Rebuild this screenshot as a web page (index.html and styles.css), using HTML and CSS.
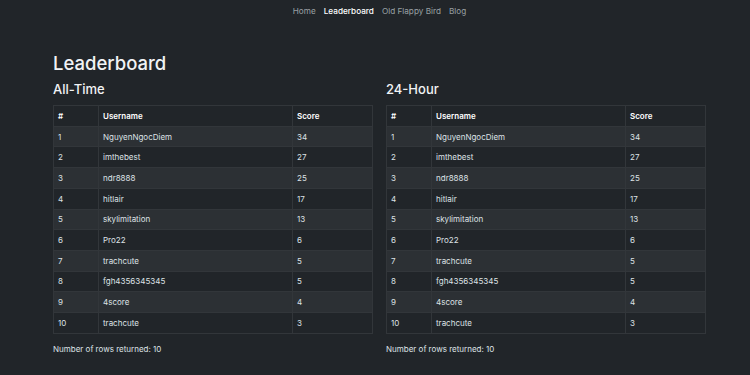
FILE: index.html
```html
<!DOCTYPE html>
<html lang="en">

<head>
  <meta charset="UTF-8">
  <meta name="viewport" content="width=device-width, initial-scale=1.0">
  <title>Leaderboard</title>
  <link rel="stylesheet" href="styles.css">
</head>

<body>
  <nav class="nav">
    <a href="#" class="nav-link">Home</a>
    <a href="#" class="nav-link active">Leaderboard</a>
    <a href="#" class="nav-link">Old Flappy Bird</a>
    <a href="#" class="nav-link">Blog</a>
  </nav>

  <div class="container">
    <h1>Leaderboard</h1>

    <div class="row">
      <div class="col">
        <h2>All-Time</h2>
        <table class="table">
          <thead>
            <tr><th class="c-rank">#</th><th class="c-user">Username</th><th>Score</th></tr>
          </thead>
          <tbody>
            <tr><td>1</td><td>NguyenNgocDiem</td><td>34</td></tr>
            <tr><td>2</td><td>imthebest</td><td>27</td></tr>
            <tr><td>3</td><td>ndr8888</td><td>25</td></tr>
            <tr><td>4</td><td>hitlair</td><td>17</td></tr>
            <tr><td>5</td><td>skylimitation</td><td>13</td></tr>
            <tr><td>6</td><td>Pro22</td><td>6</td></tr>
            <tr><td>7</td><td>trachcute</td><td>5</td></tr>
            <tr><td>8</td><td>fgh4356345345</td><td>5</td></tr>
            <tr><td>9</td><td>4score</td><td>4</td></tr>
            <tr><td>10</td><td>trachcute</td><td>3</td></tr>
          </tbody>
        </table>
        <p class="rows-note">Number of rows returned: 10</p>
      </div>

      <div class="col">
        <h2>24-Hour</h2>
        <table class="table">
          <thead>
            <tr><th class="c-rank">#</th><th class="c-user">Username</th><th>Score</th></tr>
          </thead>
          <tbody>
            <tr><td>1</td><td>NguyenNgocDiem</td><td>34</td></tr>
            <tr><td>2</td><td>imthebest</td><td>27</td></tr>
            <tr><td>3</td><td>ndr8888</td><td>25</td></tr>
            <tr><td>4</td><td>hitlair</td><td>17</td></tr>
            <tr><td>5</td><td>skylimitation</td><td>13</td></tr>
            <tr><td>6</td><td>Pro22</td><td>6</td></tr>
            <tr><td>7</td><td>trachcute</td><td>5</td></tr>
            <tr><td>8</td><td>fgh4356345345</td><td>5</td></tr>
            <tr><td>9</td><td>4score</td><td>4</td></tr>
            <tr><td>10</td><td>trachcute</td><td>3</td></tr>
          </tbody>
        </table>
        <p class="rows-note">Number of rows returned: 10</p>
      </div>
    </div>
  </div>
</body>

</html>
```

FILE: styles.css
```css
* {
  margin: 0;
  padding: 0;
  box-sizing: border-box;
}

body {
  font-family: Inter, 'Noto Sans', sans-serif;
  background: #212529;
  color: #dee2e6;
  font-size: 8px;
  line-height: 1.5;
  padding-left: 9px;
}

.nav {
  display: flex;
  justify-content: center;
  gap: 8px;
  padding: 5px 0 4px;
  font-size: 8.2px;
}

.nav-link {
  color: rgba(222, 226, 230, 0.65);
  text-decoration: none;
}

.nav-link.active {
  color: #fff;
  font-weight: 500;
}

.container {
  width: 653px;
  margin: 0 auto;
  padding-top: 31px;
}

h1 {
  font-size: 18.5px;
  font-weight: 500;
  line-height: 1.2;
  color: #f1f3f5;
  margin-bottom: 8px;
}

.row {
  display: flex;
  gap: 13px;
}

.col {
  flex: 1;
}

h2 {
  font-size: 13px;
  font-weight: 500;
  line-height: 1.2;
  color: #f1f3f5;
  margin-bottom: 7px;
}

.table {
  width: 100%;
  border-collapse: collapse;
  border: 1px solid #32363a;
}

.table th,
.table td {
  text-align: left;
  padding: 3.85px 4px;
  border: 1px solid #32363a;
}

.table th {
  font-weight: 600;
  color: #fff;
}

.c-rank {
  width: 45px;
}

.c-user {
  width: 194px;
}

.table tbody tr:nth-child(odd) {
  background: #2c3034;
}

.rows-note {
  margin-top: 9px;
}
```
